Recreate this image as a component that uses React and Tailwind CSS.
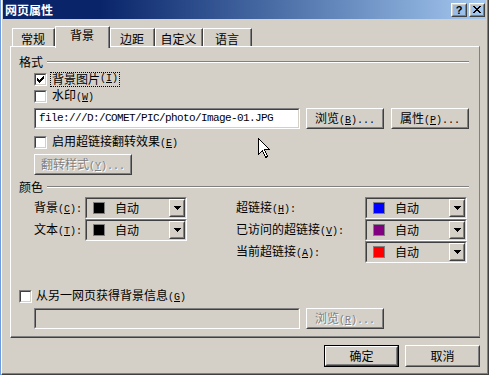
import React from 'react';

const mono = "font-['Liberation_Mono',monospace] text-[10px]";
const dim = "text-[#808080] [text-shadow:1px_1px_0_#fff]";

function Key({ k, tail = '' }) {
  return (
    <span className={mono}>
      (<span className="underline">{k}</span>){tail}
    </span>
  );
}

function Button({ className = '', children, disabled, isDefault }) {
  const body = (
    <div className="flex h-full w-full border border-t-white border-l-white border-r-[#404040] border-b-[#404040]">
      <div className="flex flex-1 items-center justify-center border border-t-[#d4d0c8] border-l-[#d4d0c8] border-r-[#808080] border-b-[#808080]">
        <span className={disabled ? dim : ''}>{children}</span>
      </div>
    </div>
  );
  if (isDefault) {
    return <div className={`flex border border-black ${className}`}>{body}</div>;
  }
  return <div className={`flex ${className}`}>{body}</div>;
}

function Sunken({ className = '', inner = '', children }) {
  return (
    <div className={`flex border border-t-[#808080] border-l-[#808080] border-r-white border-b-white ${className}`}>
      <div className={`flex flex-1 items-center border border-t-[#404040] border-l-[#404040] border-r-[#d4d0c8] border-b-[#d4d0c8] ${inner}`}>
        {children}
      </div>
    </div>
  );
}

function Check({ checked }) {
  return (
    <Sunken className="h-[13px] w-[13px] shrink-0" inner="justify-center bg-white">
      {checked && (
        <svg width="7" height="7" viewBox="0 0 7 7" shapeRendering="crispEdges">
          <path d="M0 2h1v3h-1zM1 3h1v3h-1zM2 4h1v3h-1zM3 3h1v3h-1zM4 2h1v3h-1zM5 1h1v3h-1zM6 0h1v3h-1z" fill="black" />
        </svg>
      )}
    </Sunken>
  );
}

function Groove({ label }) {
  return (
    <div className="flex h-[14px] items-center">
      <span className="mr-[4px]">{label}</span>
      <div className="h-[2px] flex-1 border-t border-b border-t-[#808080] border-b-white" />
    </div>
  );
}

function ColorSelect({ swatch }) {
  return (
    <Sunken className="h-[22px] w-[102px]" inner="bg-[#d4d0c8]">
      <div className={`ml-[6px] h-[12px] w-[12px] border border-[#808080] ${swatch}`} />
      <span className="ml-[10px]">自动</span>
      <Button className="ml-auto h-full w-[16px]">
        <svg width="7" height="4" viewBox="0 0 7 4" shapeRendering="crispEdges">
          <path d="M0 0h7v1h-7zM1 1h5v1h-5zM2 2h3v1h-3zM3 3h1v1h-1z" fill="black" />
        </svg>
      </Button>
    </Sunken>
  );
}

function Tab({ label, width, selected }) {
  if (selected) {
    return (
      <div className={`relative z-10 -mb-[2px] flex h-[22px] ${width} border-t border-l border-t-white border-l-white border-r border-r-[#404040] bg-[#d4d0c8]`}>
        <div className="flex flex-1 justify-center border-r border-r-[#808080] pt-[2px]">{label}</div>
      </div>
    );
  }
  return (
    <div className={`flex h-[18px] ${width} border-t border-l border-t-white border-l-white border-r border-r-[#404040]`}>
      <div className="flex flex-1 justify-center border-r border-r-[#808080] pt-[4px]">{label}</div>
    </div>
  );
}

export default function App() {
  return (
    <div className="relative flex h-[375px] w-[489px] bg-[#d4d0c8] font-['Noto_Sans_CJK_SC',sans-serif] text-[12px] leading-none text-black">
      <div className="w-px bg-[#6c9be0]" />
      <div className="flex flex-1 flex-col border-l border-r border-b border-l-white border-r-[#404040] border-b-[#404040]">
        <div className="flex flex-1 flex-col border-r border-b border-r-[#808080] border-b-[#808080] pl-px pr-px">
          {/* title bar */}
          <div className="flex h-[19px] items-center bg-linear-to-r from-[#0a246a] from-20% to-[#a6caf0] pl-[2px] pr-[1px]">
            <span className="font-bold text-white">网页属性</span>
            <div className="ml-auto flex gap-[2px]">
              <Button className="h-[14px] w-[16px]">
                <span className="font-['Liberation_Sans',sans-serif] text-[11px] font-bold">?</span>
              </Button>
              <Button className="h-[14px] w-[16px]">
                <svg width="8" height="7" viewBox="0 0 8 7" shapeRendering="crispEdges">
                  <path d="M0 0h2v1h-2zM6 0h2v1h-2zM1 1h2v1h-2zM5 1h2v1h-2zM2 2h4v1h-4zM3 3h2v1h-2zM2 4h4v1h-4zM1 5h2v1h-2zM5 5h2v1h-2zM0 6h2v1h-2zM6 6h2v1h-2z" fill="black" />
                </svg>
              </Button>
            </div>
          </div>

          {/* tabs */}
          <div className="ml-[9px] mt-[7px] flex h-[20px] items-end">
            <Tab label="常规" width="w-[43px]" />
            <Tab label="背景" width="w-[55px]" selected />
            <Tab label="边距" width="w-[45px]" />
            <Tab label="自定义" width="w-[48px]" />
            <Tab label="语言" width="w-[49px]" />
          </div>

          {/* panel */}
          <div className="ml-[7px] flex h-[292px] w-[470px] border-t border-l border-r border-b border-t-white border-l-white border-r-[#404040] border-b-[#404040]">
            <div className="flex flex-1 flex-col border-r border-b border-r-[#808080] border-b-[#808080] pl-[8px] pr-[10px] pt-[8px]">
              <Groove label="格式" />

              <div className="mt-[3px] flex h-[14px] items-center pl-[15px]">
                <Check checked />
                <span className="ml-[3px] flex h-[15px] items-center border border-dotted border-black px-[1px]">
                  背景图片<Key k="I" />
                </span>
              </div>

              <div className="mt-[3px] flex h-[14px] items-center pl-[15px]">
                <Check />
                <span className="ml-[5px]">
                  水印<Key k="W" />
                </span>
              </div>

              <div className="mt-[5px] flex h-[21px] pl-[15px]">
                <Sunken className="w-[266px]" inner="bg-white pl-[3px]">
                  <span className="font-['Liberation_Mono',monospace] text-[11px] tracking-[-0.6px]">file:///D:/COMET/PIC/photo/Image-01.JPG</span>
                </Sunken>
                <Button className="ml-[6px] w-[78px]">
                  浏览<Key k="B" tail="..." />
                </Button>
                <Button className="ml-[7px] w-[78px]">
                  属性<Key k="P" tail="..." />
                </Button>
              </div>

              <div className="mt-[6px] flex h-[14px] items-center pl-[15px]">
                <Check />
                <span className="ml-[5px]">
                  启用超链接翻转效果<Key k="E" />
                </span>
              </div>

              <div className="mt-[5px] flex h-[21px] pl-[15px]">
                <Button className="w-[98px]" disabled>
                  翻转样式<Key k="Y" tail="..." />
                </Button>
              </div>

              <div className="mt-[5px]">
                <Groove label="颜色" />
              </div>

              <div className="mt-[3px] flex pl-[15px]">
                <div className="flex flex-col">
                  <div className="flex h-[22px] items-center">
                    <span className="w-[51px]">背景<Key k="C" tail=":" /></span>
                    <ColorSelect swatch="bg-black" />
                  </div>
                  <div className="flex h-[22px] items-center">
                    <span className="w-[51px]">文本<Key k="T" tail=":" /></span>
                    <ColorSelect swatch="bg-black" />
                  </div>
                </div>
                <div className="ml-[49px] flex flex-col">
                  <div className="flex h-[22px] items-center">
                    <span className="w-[129px]">超链接<Key k="H" tail=":" /></span>
                    <ColorSelect swatch="bg-[#0000ff]" />
                  </div>
                  <div className="flex h-[22px] items-center">
                    <span className="w-[129px]">已访问的超链接<Key k="V" tail=":" /></span>
                    <ColorSelect swatch="bg-[#800080]" />
                  </div>
                  <div className="flex h-[22px] items-center">
                    <span className="w-[129px]">当前超链接<Key k="A" tail=":" /></span>
                    <ColorSelect swatch="bg-[#ff0000]" />
                  </div>
                </div>
              </div>

              <div className="mt-[26px] flex h-[14px] items-center">
                <Check />
                <span className="ml-[4px]">
                  从另一网页获得背景信息<Key k="G" />
                </span>
              </div>

              <div className="mt-[5px] flex h-[21px] pl-[15px]">
                <Sunken className="w-[266px]" inner="bg-[#d4d0c8]" />
                <Button className="ml-[6px] w-[78px]" disabled>
                  浏览<Key k="R" tail="..." />
                </Button>
              </div>
            </div>
          </div>

          {/* dialog buttons */}
          <div className="ml-[7px] mt-[7px] flex h-[22px] w-[470px] justify-end gap-[6px]">
            <Button className="w-[75px]" isDefault>确定</Button>
            <Button className="w-[75px]">取消</Button>
          </div>
        </div>
      </div>

      {/* mouse pointer */}
      <svg className="absolute left-[258px] top-[138px]" width="13" height="21" viewBox="0 0 13 21" shapeRendering="crispEdges">
        <path d="M0.5 0.5 L0.5 16.5 L4.5 12.5 L7.5 19.5 L9.5 18.5 L6.5 11.5 L11.5 11.5 Z" fill="white" stroke="black" strokeWidth="1" />
      </svg>
    </div>
  );
}
